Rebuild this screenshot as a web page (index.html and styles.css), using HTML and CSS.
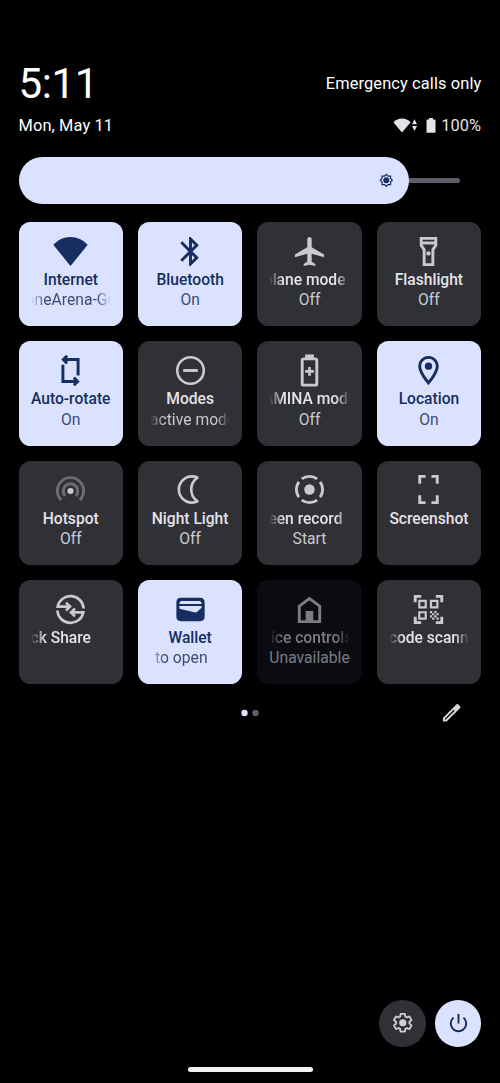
FILE: index.html
```html
<!DOCTYPE html>
<html lang="en">
<head>
<meta charset="utf-8">
<title>Quick Settings</title>
<link rel="stylesheet" href="styles.css">
</head>
<body>
<div class="screen">
  <header class="header">
    <div class="row row-clock"><div class="clock">5:11</div><div class="carrier">Emergency calls only</div></div>
    <div class="row row-date">
      <div class="date">Mon, May 11</div>
      <div class="status">
        <svg class="s-wifi" viewBox="0 0 25 15"><path d="M9 14.6L.4 4.2Q4 .6 9 .6t8.600 3.600z"/><path d="M19 6.200L21.500 1.200l2.500 5zM19 8h5l-2.500 5z"/></svg>
        <svg class="s-batt" viewBox="0 0 10 15"><path d="M3 0h4v1.500h1.700q.8 0 .8.800v11.700q0 .8-.8.800H1.300q-.8 0-.8-.8V2.300q0-.8.8-.8H3z"/></svg>
        <span class="pct">100%</span>
      </div>
    </div>
  </header>

  <div class="slider">
    <div class="slider-fill">
      <svg class="sun" viewBox="0 0 24 24"><path fill-rule="evenodd" d="M20 8.690V4h-4.690L12 .690 8.690 4H4v4.690L.690 12 4 15.310V20h4.690L12 23.310 15.310 20H20v-4.690L23.310 12 20 8.690zm-2 5.790V18h-3.520L12 20.480 9.520 18H6v-3.520L3.520 12 6 9.520V6h3.520L12 3.520 14.480 6H18v3.520L20.480 12 18 14.480z"/><circle cx="12" cy="12" r="4.900"/></svg>
    </div>
    <div class="slider-track"></div>
  </div>

  <main class="tiles">
    <div class="tile on">
      <svg class="icon" viewBox="0 0 24 24"><path d="M12 22L.2 7.400Q5 2.100 12 2.100T23.800 7.400z"/></svg>
      <div class="title">Internet</div>
      <div class="sub fade"><span class="t-internet">oneArena-Gu</span></div>
    </div>
    <div class="tile on">
      <svg class="icon" viewBox="0 0 24 24"><path d="M17.710 7.710L12 2h-1v7.590L6.410 5 5 6.410 10.590 12 5 17.590 6.410 19 11 14.410V22h1l5.710-5.710-4.300-4.290 4.300-4.290zM13 5.830l1.880 1.880L13 9.590V5.830zm1.880 10.460L13 18.170v-3.760l1.880 1.880z"/></svg>
      <div class="title">Bluetooth</div>
      <div class="sub">On</div>
    </div>
    <div class="tile">
      <svg class="icon" viewBox="0 0 24 24"><path d="M22 16v-2l-8.500-5V3.500C13.500 2.670 12.830 2 12 2s-1.500.670-1.500 1.500V9L2 14v2l8.500-2.500V19L8 20.500V22l4-1 4 1v-1.500L13.500 19v-5.500L22 16z"/></svg>
      <div class="title fade"><span class="t-plane">plane mode</span></div>
      <div class="sub">Off</div>
    </div>
    <div class="tile">
      <svg class="icon" viewBox="0 0 24 24"><path class="line" d="M7 3h10v4.700l-2 3V21H9V10.700l-2-3zM7 6.200h10"/><circle cx="12" cy="13.300" r="1.500"/></svg>
      <div class="title">Flashlight</div>
      <div class="sub">Off</div>
    </div>

    <div class="tile on">
      <svg class="icon" viewBox="0 0 24 24"><path class="line" d="M17.200 15.500V4.500H7.500M9.700 1.900L7.100 4.500l2.600 2.600M6.800 8v11.500h9.500M14.300 16.900l2.600 2.600-2.600 2.600"/></svg>
      <div class="title">Auto-rotate</div>
      <div class="sub">On</div>
    </div>
    <div class="tile">
      <svg class="icon" viewBox="0 0 24 24"><circle class="line thin" cx="12" cy="12" r="9.100"/><path d="M7 11h10v2H7z"/></svg>
      <div class="title">Modes</div>
      <div class="sub fade"><span class="t-modes">active mode</span></div>
    </div>
    <div class="tile">
      <svg class="icon" viewBox="0 0 24 24"><path d="M9 1h6v3H9z"/><rect class="line" x="7" y="4" width="10" height="18" rx="1"/><path class="line thin" d="M12 9.600v6M9 12.600h6"/></svg>
      <div class="title fade"><span class="t-stamina">AMINA mode</span></div>
      <div class="sub">Off</div>
    </div>
    <div class="tile on">
      <svg class="icon" viewBox="0 0 24 24"><path fill-rule="evenodd" d="M12 2C8.130 2 5 5.130 5 9c0 5.250 7 13 7 13s7-7.750 7-13c0-3.870-3.130-7-7-7zM7 9c0-2.760 2.240-5 5-5s5 2.240 5 5c0 2.880-2.880 7.190-5 9.880C9.920 16.210 7 11.850 7 9z"/><circle cx="12" cy="9" r="2.500"/></svg>
      <div class="title">Location</div>
      <div class="sub">On</div>
    </div>

    <div class="tile">
      <svg class="icon" viewBox="0 0 24 24"><path class="line dim" d="M5.600 19.200a9 9 0 1 1 12.800 0M8.300 16.400a5 5 0 1 1 7.400 0"/><circle cx="12" cy="13" r="2.100"/></svg>
      <div class="title">Hotspot</div>
      <div class="sub">Off</div>
    </div>
    <div class="tile">
      <svg class="icon" viewBox="0 0 24 24"><path class="line thin" stroke-linejoin="round" d="M16.800 3.900C15.500 3.200 14.200 3 13 3a9 9 0 1 0 0 18c1.400 0 2.700-.3 3.800-.9-2.800-1.900-4.300-4.800-4.300-8.100s1.500-6.200 4.300-8.100z"/></svg>
      <div class="title">Night Light</div>
      <div class="sub">Off</div>
    </div>
    <div class="tile">
      <svg class="icon" viewBox="0 0 24 24"><circle class="line" cx="12" cy="12" r="9" pathLength="360" stroke-dasharray="72 18" stroke-dashoffset="36"/><circle cx="12" cy="12" r="3.600"/></svg>
      <div class="title fade"><span class="t-record">een record</span></div>
      <div class="sub">Start</div>
    </div>
    <div class="tile">
      <svg class="icon" viewBox="0 0 24 24"><path class="line" d="M6 8V3h4M14 3h4v5M18 16v5h-4M10 21H6v-5"/></svg>
      <div class="title">Screenshot</div>
    </div>

    <div class="tile">
      <svg class="icon" viewBox="0 0 24 24"><path class="line thin" d="M21 11.300A9 9 0 0 0 3.200 10h8.500M8.900 7.300l2.800 2.700-2.800 2.700M3 12.700A9 9 0 0 0 20.800 14h-8.300M15.100 11.300L12.300 14l2.800 2.700"/></svg>
      <div class="title fade"><span class="t-share">ck Share</span></div>
    </div>
    <div class="tile on">
      <svg class="icon" viewBox="0 0 24 24"><path fill-rule="evenodd" d="M5.500 4h13q3.200 0 3.200 3.200v9.600q0 3.200-3.200 3.200h-13q-3.200 0-3.200-3.200V7.200Q2.300 4 5.500 4zM4.400 8.200h15.200Q19.500 6.200 18 6.200H6Q4.500 6.200 4.400 8.200zM4.400 9.600v1.900l11 2.500q.6.100 1-.3l3.200-2.900V9.600z"/></svg>
      <div class="title">Wallet</div>
      <div class="sub fade"><span class="t-open">to open</span></div>
    </div>
    <div class="tile disabled">
      <svg class="icon" viewBox="0 0 24 24"><path class="line" d="M5 20.300V9.700l7-5.200 7 5.200v10.600z"/><path d="M9.400 13h5.200v7.300H9.400z"/></svg>
      <div class="title fade"><span class="t-device">ice controls</span></div>
      <div class="sub">Unavailable</div>
    </div>
    <div class="tile">
      <svg class="icon" viewBox="0 0 24 24"><path class="line" d="M2.900 7V3H7M17 3h4.100v4M21.100 17v4H17M7 21H2.900v-4"/><path class="line qr" d="M5.700 6.100h4.400v4.400H5.700zM13.700 6.100h4.400v4.400h-4.400zM5.700 13.900h4.400v4.400H5.700z"/><path d="M13 13h1.500v1.500H13zM16 13h1.500v1.500H16zM14.500 14.500H16V16h-1.500zM17.500 14.500H19V16h-1.500zM13 16h1.500v1.500H13zM16 16h1.500v1.500H16zM14.500 17.500H16V19h-1.500zM17.500 17.500H19V19h-1.500z"/></svg>
      <div class="title fade"><span class="t-qr">code scann</span></div>
    </div>
  </main>

  <div class="pager">
    <svg class="dots" viewBox="0 0 18 8"><circle cx="3.500" cy="4" r="3.200"/><circle class="off" cx="14.500" cy="4" r="3.200"/></svg>
    <svg class="pencil" viewBox="0 0 24 24"><path fill-rule="evenodd" d="M14.060 9.020l.920.920L5.920 19H5v-.920l9.060-9.060M17.660 3c-.250 0-.510.100-.700.290l-1.830 1.830L3 17.250V21h3.750L17.810 9.940l2.900-2.900c.390-.390.390-1.020 0-1.410l-2.340-2.340c-.200-.200-.450-.290-.710-.290z"/></svg>
  </div>

  <footer class="footer">
    <div class="round">
      <svg class="gear" viewBox="0 0 24 24"><path class="line" d="M19.430 12.980c.040-.320.070-.640.070-.980 0-.340-.030-.660-.070-.980l2.110-1.650c.190-.150.240-.420.120-.640l-2-3.460c-.090-.160-.260-.250-.440-.250-.060 0-.120.010-.170.030l-2.490 1c-.520-.400-1.080-.730-1.690-.980l-.380-2.650C14.460 2.180 14.250 2 14 2h-4c-.250 0-.460.180-.490.420l-.380 2.650c-.610.250-1.170.590-1.690.980l-2.490-1c-.060-.020-.120-.030-.180-.030-.170 0-.340.090-.430.250l-2 3.460c-.130.220-.070.490.120.640l2.110 1.650c-.040.320-.070.650-.070.980 0 .330.030.660.070.980l-2.110 1.650c-.190.150-.240.420-.120.640l2 3.460c.090.160.260.250.440.250.060 0 .120-.010.170-.030l2.490-1c.520.400 1.080.730 1.690.980l.380 2.650c.030.240.240.420.490.420h4c.250 0 .460-.180.490-.420l.380-2.650c.610-.250 1.170-.590 1.690-.980l2.490 1c.060.020.120.030.180.030.170 0 .340-.090.430-.250l2-3.460c.120-.220.070-.490-.120-.640z"/><circle cx="12" cy="12" r="4"/></svg>
    </div>
    <div class="round power">
      <svg class="pwr" viewBox="0 0 24 24"><path d="M13 2h-2v10h2V2zm4.830 3.170l-1.420 1.420C17.990 7.860 19 9.810 19 12c0 3.870-3.130 7-7 7s-7-3.130-7-7c0-2.190 1.010-4.140 2.580-5.420L6.170 5.170C4.230 6.820 3 9.260 3 12c0 4.970 4.030 9 9 9s9-4.030 9-9c0-2.740-1.230-5.180-3.170-6.830z"/></svg>
    </div>
  </footer>
  <div class="home-bar"></div>
</div>
</body>
</html>
```

FILE: styles.css
```css
* { box-sizing: border-box; }

body {
  margin: 0;
  background: #000;
  font-family: Roboto, "Noto Sans", sans-serif;
}

.screen {
  width: 500px;
  height: 1083px;
  padding: 58px 18.600px 0 18.600px;
  display: flex;
  flex-direction: column;
  background: #000;
  color: #fff;
  overflow: hidden;
}

svg { display: block; flex: none; fill: currentColor; }
.line { fill: none; stroke: currentColor; stroke-width: 2; }
.thin { stroke-width: 1.800; }
.qr { stroke-width: 1.500; }
.dim { opacity: .4; }

/* clock, date and status */
.header { height: 99px; }
.row { display: flex; justify-content: space-between; align-items: center; }
.row-clock { height: 48px; padding-top: 3px; }
.clock { font-size: 42px; line-height: 48px; letter-spacing: -.4px; }
.carrier { font-size: 16.400px; line-height: 20px; letter-spacing: .12px; }
.row-date { height: 20px; margin-top: 9.500px; }
.date { font-size: 16.400px; line-height: 20px; letter-spacing: .1px; }
.status { display: flex; align-items: center; color: #e4e2e6; }
.s-wifi { width: 25px; height: 15px; }
.s-batt { width: 10px; height: 15px; margin: 0 5px 0 8px; }
.pct { font-size: 16.400px; line-height: 20px; padding-right: .5px; }

/* brightness */
.slider { height: 47px; display: flex; align-items: center; }
.slider-fill {
  width: 390.500px;
  height: 46.600px;
  padding-right: 16px;
  border-radius: 23.300px;
  background: #dae2ff;
  color: #162e60;
  display: flex;
  align-items: center;
  justify-content: flex-end;
}
.sun { width: 14.600px; height: 14.600px; }
.slider-track { width: 51px; height: 5px; border-radius: 0 2.500px 2.500px 0; background: #5d5e67; }

/* tiles */
.tiles {
  margin-top: 18px;
  display: grid;
  grid-template-columns: repeat(4, 104.300px);
  grid-auto-rows: 104.300px;
  gap: 15.100px;
}
.tile {
  padding: 11.500px 12px 0;
  border-radius: 11.500px;
  background: #303136;
  color: #c9c9d1;
  display: flex;
  flex-direction: column;
  align-items: center;
}
.icon { width: 35px; height: 35px; overflow: visible; }
.title, .sub {
  width: 80.300px;
  height: 20.300px;
  line-height: 20.300px;
  display: flex;
  justify-content: center;
  white-space: nowrap;
}
.title { margin-top: 1.500px; font-size: 15.600px; font-weight: 500; color: #e4e2e8; }
.sub { font-size: 15.700px; }
.on { background: #dae2ff; color: #162e60; }
.on .title { color: #162e60; }
.on .sub { color: #3a4d78; }
.disabled { background: #0b0c12; color: #7b7c84; }
.disabled .title { color: #7b7c84; }

/* scrolling labels fade out at both ends */
.fade {
  justify-content: flex-start;
  overflow: hidden;
  -webkit-mask-image: linear-gradient(90deg, transparent, #000 14px, #000 calc(100% - 14px), transparent);
  mask-image: linear-gradient(90deg, transparent, #000 14px, #000 calc(100% - 14px), transparent);
}
.t-internet { margin-left: -5px; }
.t-plane { margin-left: -5.500px; }
.t-stamina { margin-left: -6.500px; }
.t-record { margin-left: -1px; }
.t-open { margin-left: 5px; }
.t-device { margin-left: 1.500px; }

/* page dots and edit */
.pager { position: relative; height: 24px; margin-top: 16.300px; display: flex; align-items: center; justify-content: center; }
.dots { width: 18px; height: 8px; color: #dae2ff; }
.off { fill: #5d5e67; }
.pencil { position: absolute; right: 18px; top: 0; width: 23.500px; height: 23.500px; color: #d6d6dc; }

/* bottom actions */
.footer { margin-top: auto; display: flex; justify-content: flex-end; gap: 9px; }
.round { width: 46.600px; height: 46.600px; border-radius: 50%; background: #303136; color: #d0d0d6; display: flex; align-items: center; justify-content: center; }
.power { background: #dae2ff; color: #162e60; }
.gear { width: 21.500px; height: 21.500px; overflow: visible; }
.pwr { width: 23px; height: 23px; }
.home-bar { align-self: center; width: 125px; height: 5px; border-radius: 3px; margin: 20px 0 11.500px; background: #f2f2f2; }
```
